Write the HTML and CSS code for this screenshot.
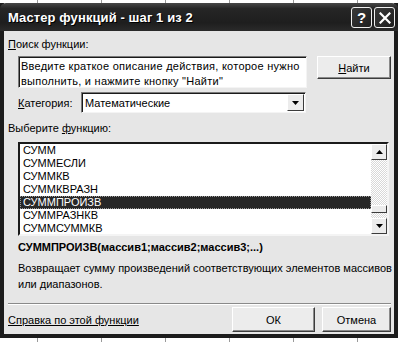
FILE: index.html
```html
<!DOCTYPE html>
<html lang="ru">
<head>
    <meta charset="UTF-8">
    <title>Мастер функций - шаг 1 из 2</title>
    <link rel="stylesheet" href="styles.css">
</head>
<body>
    <div class="window">
        <div class="titlebar">
            <span class="title">Мастер функций - шаг 1 из 2</span>
            <div class="title-buttons">
                <span class="tbtn help-btn">?</span>
                <span class="tbtn close-btn">
                    <svg width="12" height="12" viewBox="0 0 12 12"><path d="M1.5 1.5 L10.5 10.5 M10.5 1.5 L1.5 10.5" stroke="#fff" stroke-width="2.2" stroke-linecap="square"/></svg>
                </span>
            </div>
        </div>

        <div class="client">
            <div class="label"><u>П</u>оиск функции:</div>
            <div class="search-row">
                <div class="textbox">Введите краткое описание действия, которое нужно выполнить, и нажмите кнопку "Найти"</div>
                <button class="btn find-btn"><u>Н</u>айти</button>
            </div>

            <div class="category-row">
                <span class="category-label"><u>К</u>атегория:</span>
                <div class="select">
                    <span class="select-value">Математические</span>
                    <span class="drop-btn">
                        <svg width="7" height="4" viewBox="0 0 7 4"><path d="M0 0 H7 L3.5 4 Z" fill="#000"/></svg>
                    </span>
                </div>
            </div>

            <div class="label list-label">Выберите <u>ф</u>ункцию:</div>
            <div class="listbox">
                <ul class="items">
                    <li>СУММ</li>
                    <li>СУММЕСЛИ</li>
                    <li>СУММКВ</li>
                    <li>СУММКВРАЗН</li>
                    <li class="selected">СУММПРОИЗВ</li>
                    <li>СУММРАЗНКВ</li>
                    <li>СУММСУММКВ</li>
                </ul>
                <div class="scrollbar">
                    <span class="sb-btn">
                        <svg width="7" height="4" viewBox="0 0 7 4"><path d="M0 4 H7 L3.5 0 Z" fill="#000"/></svg>
                    </span>
                    <div class="sb-track"><span class="sb-thumb"></span></div>
                    <span class="sb-btn">
                        <svg width="7" height="4" viewBox="0 0 7 4"><path d="M0 0 H7 L3.5 4 Z" fill="#000"/></svg>
                    </span>
                </div>
            </div>

            <div class="signature">СУММПРОИЗВ(массив1;массив2;массив3;...)</div>
            <div class="desc">Возвращает сумму произведений соответствующих элементов массивов<br>или диапазонов.</div>

            <div class="separator"></div>

            <div class="footer">
                <a class="help-link" href="#">Справка по этой функции</a>
                <button class="btn ok-btn">ОК</button>
                <button class="btn cancel-btn">Отмена</button>
            </div>
        </div>
    </div>
</body>
</html>
```

FILE: styles.css
```css
body {
    margin: 0;
    height: 342px;
    overflow: hidden;
    font-family: 'Liberation Sans', Arial, sans-serif;
    font-size: 11px;
    color: #000;
    background: #fff repeating-linear-gradient(90deg, transparent 0, transparent 37px, #9a9a9a 37px, #9a9a9a 38px, transparent 38px, transparent 64px);
}

.window {
    margin-top: 3px;
    width: 390px;
    height: 331px;
    border: 4px solid #1c1c1c;
    border-top: none;
    background: #e6e6e6;
    display: flex;
    flex-direction: column;
}

.titlebar {
    height: 28px;
    margin: 0 -4px;
    padding: 0 3px 0 8px;
    background: linear-gradient(#474747 0%, #262626 20%, #1e1e1e 70%, #2a2a2a 100%);
    border-radius: 6px 6px 0 0;
    display: flex;
    align-items: center;
    justify-content: space-between;
}

.title {
    color: #fff;
    font-weight: bold;
    font-size: 13px;
    letter-spacing: 0.1px;
    text-shadow: 1px 1px 0 #000;
}

.title-buttons {
    display: flex;
    gap: 2px;
    margin-top: 1px;
}

.tbtn {
    width: 19px;
    height: 19px;
    border: 1px solid #f0f0f0;
    border-radius: 3px;
    background: linear-gradient(135deg, #3a3a3a, #1e1e1e);
    color: #fff;
    display: flex;
    align-items: center;
    justify-content: center;
}

.help-btn {
    font-weight: bold;
    font-size: 15px;
}

.client {
    flex: 1;
    padding: 7px 3px 0 4px;
    display: flex;
    flex-direction: column;
}

.label {
    line-height: 13px;
}

.search-row {
    display: flex;
    align-items: flex-start;
    margin: 5px 0 0 10px;
}

.textbox {
    width: 283px;
    height: 28px;
    padding: 2px 2px 0;
    background: #fff;
    border: 1px solid;
    border-color: #7a7a7a #f4f4f4 #f4f4f4 #7a7a7a;
    box-shadow: inset 1px 1px 0 #1a1a1a;
    line-height: 15px;
    letter-spacing: 0.25px;
}

.btn {
    font-family: inherit;
    font-size: 11px;
    color: #000;
    background: #ececec;
    border: 1px solid;
    border-color: #ffffff #3c3c3c #3c3c3c #ffffff;
    box-shadow: inset -1px -1px 0 #8a8a8a;
    padding: 0;
}

.find-btn {
    width: 74px;
    height: 23px;
    margin-left: 10px;
}

.category-row {
    display: flex;
    align-items: center;
    margin: 4px 0 0 10px;
}

.category-label {
    width: 63px;
}

.select {
    width: 221px;
    height: 17px;
    padding: 1px;
    background: #fff;
    border: 1px solid;
    border-color: #7a7a7a #f4f4f4 #f4f4f4 #7a7a7a;
    box-shadow: inset 1px 1px 0 #1a1a1a;
    display: flex;
    align-items: center;
    justify-content: space-between;
}

.select-value {
    padding-left: 2px;
}

.drop-btn {
    width: 15px;
    height: 15px;
    background: #ececec;
    border: 1px solid;
    border-color: #ffffff #3c3c3c #3c3c3c #ffffff;
    display: flex;
    align-items: center;
    justify-content: center;
}

.list-label {
    margin-top: 9px;
}

.listbox {
    margin: 7px 0 0 10px;
    width: 367px;
    height: 90px;
    background: #fff;
    border: 2px solid;
    border-color: #1a1a1a #f4f4f4 #f4f4f4 #1a1a1a;
    display: flex;
    overflow: hidden;
}

.items {
    flex: 1;
    list-style: none;
    margin: 0;
    padding: 0;
}

.items li {
    height: 13px;
    line-height: 13px;
    padding-left: 3px;
}

.items li.selected {
    background: #272727;
    color: #fff;
    outline: 1px dotted #9a9a9a;
    outline-offset: -1px;
}

.scrollbar {
    width: 16px;
    display: flex;
    flex-direction: column;
}

.sb-btn {
    height: 14px;
    background: #ececec;
    border: 1px solid;
    border-color: #ffffff #3c3c3c #3c3c3c #ffffff;
    display: flex;
    align-items: center;
    justify-content: center;
}

.sb-track {
    flex: 1;
    background: repeating-conic-gradient(#ffffff 0 25%, #d8d8d8 0 50%) 0 0 / 2px 2px;
    display: flex;
    flex-direction: column;
    justify-content: flex-end;
    padding-bottom: 5px;
}

.sb-thumb {
    height: 6px;
    background: #ececec;
    border: 1px solid;
    border-color: #ffffff #3c3c3c #3c3c3c #ffffff;
}

.signature {
    margin: 5px 0 0 10px;
    font-weight: bold;
    line-height: 13px;
}

.desc {
    margin: 6px 0 0 10px;
    line-height: 16px;
    white-space: nowrap;
}

.separator {
    margin-top: 11px;
    height: 1px;
    border-top: 1px solid #8a8a8a;
    background: #fff;
}

.footer {
    display: flex;
    align-items: center;
    gap: 7px;
    margin-top: 2px;
}

.help-link {
    flex: 1;
    color: #000;
    text-decoration: underline;
}

.ok-btn {
    width: 83px;
    height: 25px;
}

.cancel-btn {
    width: 69px;
    height: 25px;
}
```
